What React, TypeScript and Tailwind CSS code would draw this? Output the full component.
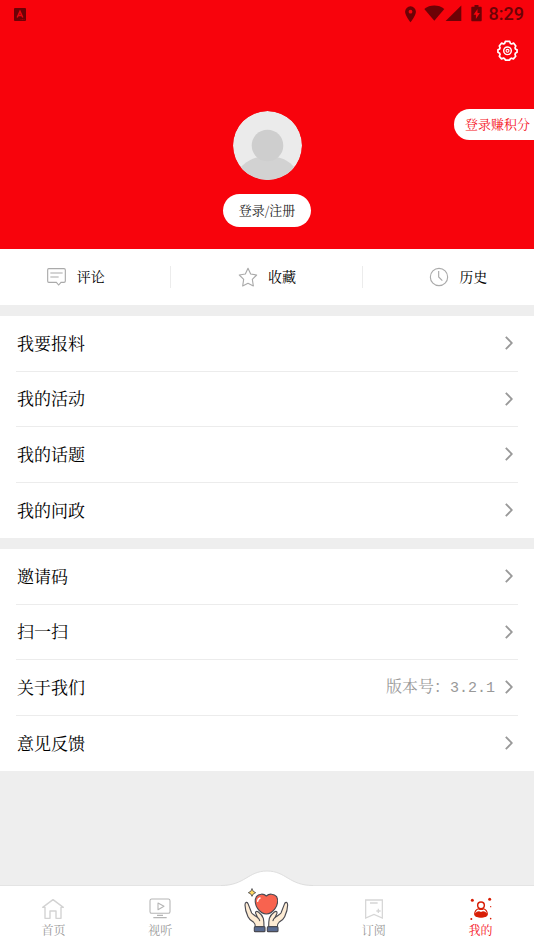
import type { ReactNode } from 'react'

const serif = "font-['Noto_Serif_CJK_SC','Noto_Serif_SC','Source_Han_Serif_SC','Noto_Sans_CJK_SC',serif]"

const reportMenu = [{ label: '我要报料' }, { label: '我的活动' }, { label: '我的话题' }, { label: '我的问政' }]

const aboutMenu = [
  { label: '邀请码' },
  { label: '扫一扫' },
  { label: '关于我们', version: '3.2.1' },
  { label: '意见反馈' },
]

function StatusBar() {
  return (
    <div className="flex h-7 items-center justify-between pl-3.5 pr-2.5 text-[#6d0206]">
      <svg width="12" height="13" viewBox="0 0 12 13" aria-hidden="true">
        <rect width="12" height="13" rx="1" fill="currentColor" />
        <path d="M3.2 9.5 6 3.4l2.8 6.1M4.2 7.6h3.6" fill="none" stroke="#e8060f" strokeWidth="1.5" />
        <path d="M6.5 11.6h4" stroke="#b80409" strokeWidth="0.8" strokeDasharray="1 0.5" />
      </svg>
      <div className="flex items-center gap-1.5">
        <svg width="80" height="18" viewBox="0 0 80 18" fill="currentColor" aria-hidden="true">
          <path
            fillRule="evenodd"
            d="M7.5 1.3A5.4 5.4 0 0 0 2.1 6.7c0 4 5.4 10.6 5.4 10.6s5.4-6.6 5.4-10.6a5.4 5.4 0 0 0-5.4-5.4Zm0 3.5a1.9 1.9 0 1 1 0 3.8 1.9 1.9 0 0 1 0-3.8Z"
          />
          <path d="M21.3 4C26.8-.6 35.8-.6 41.3 4l-10 11.7Z" />
          <path d="M58.3.5v15.6H42.6Z" />
          <path
            fillRule="evenodd"
            d="M71.5 0h4v1.7h2.2c.6 0 1 .4 1 1v12.6c0 .6-.4 1-1 1h-8.4c-.6 0-1-.4-1-1V2.7c0-.6.4-1 1-1h2.2Zm3 4-4 5.8h2.4V14l4-6h-2.4Z"
          />
        </svg>
        <span className="font-[Roboto,sans-serif] text-lg font-medium leading-7">8:29</span>
      </div>
    </div>
  )
}

function GearIcon() {
  return (
    <svg width="21" height="21" viewBox="0 0 22 22" fill="none" stroke="white" strokeWidth="1.8" aria-hidden="true">
      <path
        strokeLinejoin="round"
        d="M8.7 1.5h4.6l.8 2.2 1.2.5 2.2-.9 2.2 3-.8 1.8.3 1.2 1.8 1v2.6l-1.8 1-.3 1.3.7 1.8-2.4 2.8-2.1-.7-1.1.6-.8 1.3H8.8L8 19.6l-1.2-.6-2.1.8L2.4 17l.8-1.8-.4-1.3-1.8-1v-2.6l1.8-1 .4-1.2-.8-1.8 2.3-3 2.2.8 1.1-.5Z"
      />
      <circle cx="11" cy="11.3" r="4" strokeWidth="1.5" />
      <circle cx="11" cy="11.3" r="1.5" strokeWidth="1.2" />
    </svg>
  )
}

function Avatar() {
  return (
    <svg width="69" height="69" viewBox="0 0 70 70" className="rounded-full" role="img" aria-label="头像">
      <circle cx="35" cy="35" r="35" fill="#ebebeb" />
      <path d="M7 58C13 51 20 48 25 47h20c6 1 12 4 18 11L54 70H16Z" fill="#d2d2d2" />
      <circle cx="35" cy="35" r="16" fill="#cecece" />
    </svg>
  )
}

function QuickLink({ label, children }: { label: string; children: ReactNode }) {
  return (
    <a href="#" className="relative flex items-center justify-center gap-2.5 text-sm text-black">
      {children}
      <span className="pb-0.5">{label}</span>
    </a>
  )
}

function CommentIcon() {
  return (
    <svg width="20" height="20" viewBox="138 66 60 60" fill="none" stroke="#aaa" strokeWidth="3.4" aria-hidden="true">
      <path d="M143 71h46q4 0 4 4v33q0 4-4 4h-9l-7 8-7-8h-23q-3 0-3-4V75q0-4 3-4Z" />
      <path d="M148 84h37M148 96h25" />
    </svg>
  )
}

function StarIcon() {
  return (
    <svg width="20" height="20" viewBox="711 67 60 60" fill="none" stroke="#aaa" strokeWidth="3.4" aria-hidden="true">
      <path strokeLinejoin="round" d="m741 71 8 17 18 3-13 13 3 20-16-8-16 8 3-20-13-13 18-3Z" />
    </svg>
  )
}

function ClockIcon() {
  return (
    <svg width="20" height="20" viewBox="484 67 60 60" fill="none" stroke="#aaa" strokeWidth="3.4" aria-hidden="true">
      <circle cx="514" cy="97" r="26" />
      <path d="M513 79v18l11 11" />
    </svg>
  )
}

function MenuList({ items }: { items: { label: string; version?: string }[] }) {
  return (
    <ul className="grid h-[222px] grid-rows-4 divide-y divide-[#ececec] bg-white px-4">
      {items.map((item) => (
        <li key={item.label}>
          <a href="#" className="flex h-full items-center pl-px pr-[5px] text-[17px] text-black">
            <span className="flex-1 pb-0.5">{item.label}</span>
            {item.version && (
              <span className="mr-2.5 text-base text-[#999]">
                版本号：
                <span className="font-['Liberation_Mono',monospace] text-[15px]">{item.version}</span>
              </span>
            )}
            <svg width="8" height="14" viewBox="0 0 8 14" fill="none" stroke="#999" strokeWidth="1.8" aria-hidden="true">
              <path d="m.8.8 6 6.2-6 6.2" />
            </svg>
          </a>
        </li>
      ))}
    </ul>
  )
}

function NavItem({ label, active, children }: { label: string; active?: boolean; children: ReactNode }) {
  return (
    <a
      href="#"
      aria-current={active ? 'page' : undefined}
      className={`flex flex-col items-center text-xs leading-5 ${active ? 'text-[#f5101a]' : 'text-[#999]'}`}
    >
      {children}
      <span>{label}</span>
    </a>
  )
}

function HeartHandsIcon() {
  return (
    <svg
      width="45"
      height="45"
      viewBox="105 86 135 135"
      stroke="#4a4a52"
      strokeWidth="3.4"
      strokeLinejoin="round"
      strokeLinecap="round"
      aria-hidden="true"
    >
      <path d="M129 89q2 9 11 11-9 2-11 11-2-9-11-11 9-2 11-11Z" fill="#ffd95e" strokeWidth="2.6" />
      <path
        d="M172 110c8-8 23-7 31 2 6 10 2 27-5 36-7 10-18 16-26 16s-19-6-26-16c-7-9-10-26-4-36 7-9 22-10 30-2Z"
        fill="#f8634f"
      />
      <path d="M146 126q0-7 7-10" stroke="#fff" strokeWidth="4.5" fill="none" />
      <g fill="#fdebd3">
        <path d="M139 203c0-7-1-11-5-14-8-5-14-10-17-17-6-13-9-25-9-35 0-9 7-11 10-2l10 26c3 4 8 6 14 11l4 3-4-9c-5-7-1-13 6-8 8 6 13 12 15 19 2 8 2 17 2 26Z" />
        <path d="M205 203c0-7 1-11 5-14 8-5 14-10 17-17 6-13 9-25 9-35 0-9-7-11-10-2l-10 26c-3 4-8 6-14 11l-4 3 4-9c5-7 1-13-6-8-8 6-13 12-15 19-2 8-2 17-2 26Z" />
      </g>
      <path d="M146 175q5 4 6 9M198 175q-5 4-6 9" fill="none" />
      <g fill="#596b91">
        <rect x="136" y="202" width="32" height="15" rx="3" />
        <rect x="175" y="202" width="32" height="15" rx="3" />
      </g>
    </svg>
  )
}

function BottomNav() {
  return (
    <nav className="relative border-t border-[#e4e4e4] bg-white pb-2.5 pt-3">
      {/* raised bump behind the middle tab */}
      <svg
        className="absolute -top-4 left-1/2 -translate-x-1/2"
        width="92"
        height="18"
        viewBox="0 0 92 18"
        aria-hidden="true"
      >
        <path d="M0 15.5C24 15.5 27 1 46 1s22 14.5 46 14.5V18H0Z" fill="white" />
        <path d="M0 15.5C24 15.5 27 1 46 1s22 14.5 46 14.5" fill="none" stroke="#dedede" />
      </svg>
      <div className="relative grid grid-cols-5">
        <NavItem label="首页">
          <svg width="22" height="22" viewBox="127 115 66 66" fill="none" stroke="#d3d3d3" strokeWidth="4.2" aria-hidden="true">
            <path strokeLinejoin="round" d="m129 143 31-23 31 23h-7v33h-15v-22h-18v22h-15v-33Z" />
          </svg>
        </NavItem>
        <NavItem label="视听">
          <svg width="22" height="22" viewBox="448 115 66 66" fill="none" stroke="#b5b5b5" strokeWidth="3.2" aria-hidden="true">
            <rect x="451" y="118" width="60" height="43" rx="5" />
            <path strokeLinejoin="round" d="m475 130 18 10-18 10Z" />
            <path d="M472 167h18M461 174h40" strokeWidth="4" />
          </svg>
        </NavItem>
        <a href="#" aria-label="公益" className="-mt-2.5 flex h-[45px] justify-center">
          <HeartHandsIcon />
        </a>
        <NavItem label="订阅">
          <svg width="22" height="22" viewBox="87 115 66 66" fill="none" stroke="#d6d6d6" strokeWidth="3.8" aria-hidden="true">
            <path d="M95 121h50v54l-25-11-25 11ZM108 130h23M133 147v13M127 154h13" />
          </svg>
        </NavItem>
        <NavItem label="我的" active>
          <svg width="22" height="22" viewBox="408 115 66 66" className="overflow-visible" fill="#d81e06" aria-hidden="true">
            <circle cx="441" cy="137" r="10" fill="none" stroke="#d81e06" strokeWidth="4.4" />
            <path
              d="M433 147c-7 3-11 10-11 16 0 12 38 12 38 0 0-6-4-13-11-16-5 3-11 3-16 0Z"
              fill="none"
              stroke="#d81e06"
              strokeWidth="3.4"
            />
            <path d="M422 162q10-11 19-5 9-6 19 5c0 15-38 15-38 0Z" />
            <circle cx="415" cy="122" r="4.5" />
            <circle cx="467" cy="119" r="4.5" />
            <circle cx="470" cy="141" r="2" />
            <circle cx="412" cy="178" r="3" />
            <circle cx="470" cy="177" r="2.4" />
          </svg>
        </NavItem>
      </div>
    </nav>
  )
}

export default function App() {
  return (
    <div className={`flex min-h-screen flex-col bg-[#eeeeee] ${serif}`}>
      <header className="relative bg-[#f8030c] pb-[22px]">
        <StatusBar />
        <div className="flex justify-end px-4 pt-3">
          <button type="button" aria-label="设置">
            <GearIcon />
          </button>
        </div>
        <div className="flex flex-col items-center gap-3.5 pt-[50px]">
          <Avatar />
          <button type="button" className="h-[33px] rounded-full bg-white px-4 pb-0.5 text-[13px] text-[#222]">
            登录/注册
          </button>
        </div>
        <button
          type="button"
          className="absolute right-0 top-[109px] h-[31px] rounded-l-full bg-white pl-[11px] pr-1 pb-0.5 text-[13px] text-[#f5101a]"
        >
          登录赚积分
        </button>
      </header>

      <main className="flex-1">
        <section className="overflow-hidden bg-white">
          <div className="-mx-5 grid h-14 grid-cols-3">
            <QuickLink label="评论">
              <CommentIcon />
              <span className="absolute right-0 h-[22px] border-r border-[#ececec]" />
            </QuickLink>
            <QuickLink label="收藏">
              <StarIcon />
              <span className="absolute right-0 h-[22px] border-r border-[#ececec]" />
            </QuickLink>
            <QuickLink label="历史">
              <ClockIcon />
            </QuickLink>
          </div>
        </section>
        <div className="grid gap-[11px] pt-[11px]">
          <MenuList items={reportMenu} />
          <MenuList items={aboutMenu} />
        </div>
      </main>

      <BottomNav />
    </div>
  )
}
